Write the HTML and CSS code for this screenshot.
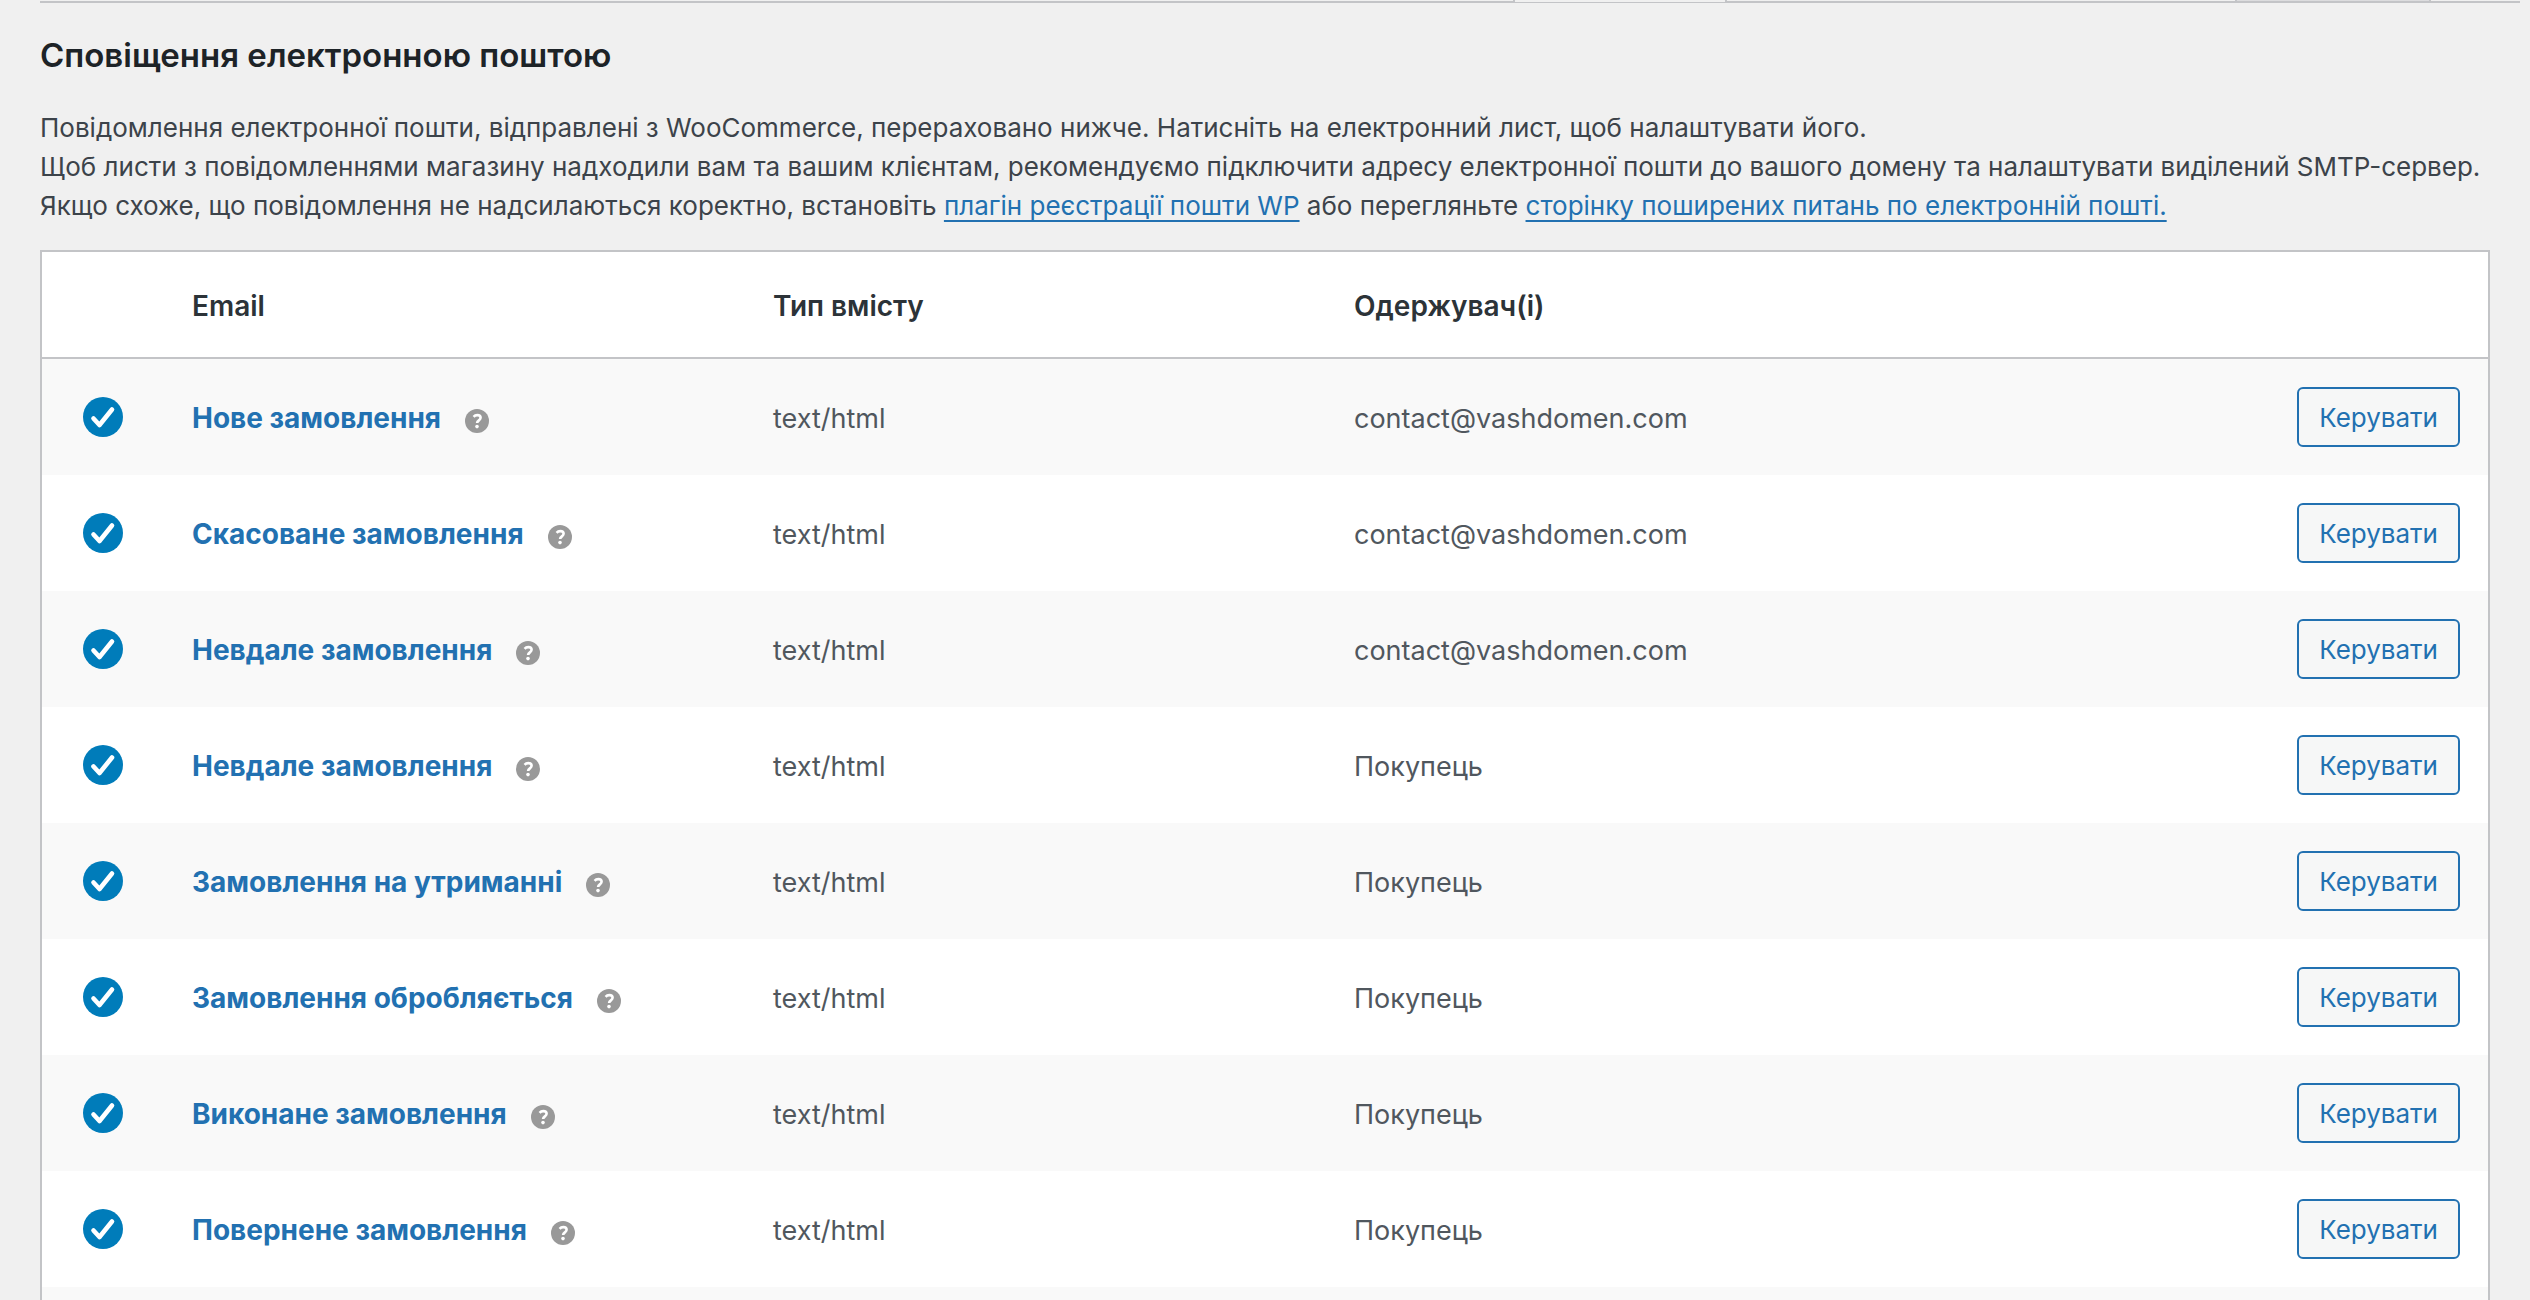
FILE: index.html
```html
<!DOCTYPE html>
<html lang="uk">
<head>
<meta charset="utf-8">
<title>Сповіщення електронною поштою</title>
<link rel="stylesheet" href="styles.css">
</head>
<body>
<svg class="sprite" aria-hidden="true">
  <symbol id="check" viewBox="0 0 40 40">
    <circle cx="20" cy="20" r="20" fill="#007cba"/>
    <path d="M10.500 21.500L16.500 28L29 12.500" fill="none" stroke="#fff" stroke-width="4.600" stroke-linecap="round" stroke-linejoin="round"/>
  </symbol>
  <symbol id="help" viewBox="0 0 24 24">
    <circle cx="12" cy="12" r="12" fill="#999"/>
    <path d="M8.600 7.800c1-1.200 2.200-1.700 3.700-1.700 2 0 3.300 1 3.300 2.700 0 2.500-3.500 2.600-3.500 5.200" fill="none" stroke="#fff" stroke-width="2.600"/>
    <circle cx="12" cy="17.600" r="1.800" fill="#fff"/>
  </symbol>
</svg>
<nav class="tabs" aria-label="Розділи налаштувань">
  <span class="tab tab-active"></span>
  <span class="tab"></span>
</nav>
<main class="page">
  <h2 class="title">Сповіщення електронною поштою</h2>
  <p class="intro">Повідомлення електронної пошти, відправлені з WooCommerce, перераховано нижче. Натисніть на електронний лист, щоб налаштувати його.<br>Щоб листи з повідомленнями магазину надходили вам та вашим клієнтам, рекомендуємо підключити адресу електронної пошти до вашого домену та налаштувати виділений SMTP-сервер.<br>Якщо схоже, що повідомлення не надсилаються коректно, встановіть <a href="#">плагін реєстрації пошти WP</a> або перегляньте <a href="#">сторінку поширених питань по електронній пошті.</a></p>
  <table class="emails">
    <colgroup><col class="col-status"><col class="col-text"><col class="col-text"><col class="col-text"><col></colgroup>
    <thead>
      <tr><th></th><th>Email</th><th>Тип вмісту</th><th>Одержувач(і)</th><th></th></tr>
    </thead>
    <tbody>
      <tr><td class="status"><svg class="check"><use href="#check"/></svg></td><td><a class="name" href="#">Нове замовлення</a><svg class="help"><use href="#help"/></svg></td><td>text/html</td><td>contact@vashdomen.com</td><td class="action"><a class="button" href="#">Керувати</a></td></tr>
      <tr><td class="status"><svg class="check"><use href="#check"/></svg></td><td><a class="name" href="#">Скасоване замовлення</a><svg class="help"><use href="#help"/></svg></td><td>text/html</td><td>contact@vashdomen.com</td><td class="action"><a class="button" href="#">Керувати</a></td></tr>
      <tr><td class="status"><svg class="check"><use href="#check"/></svg></td><td><a class="name" href="#">Невдале замовлення</a><svg class="help"><use href="#help"/></svg></td><td>text/html</td><td>contact@vashdomen.com</td><td class="action"><a class="button" href="#">Керувати</a></td></tr>
      <tr><td class="status"><svg class="check"><use href="#check"/></svg></td><td><a class="name" href="#">Невдале замовлення</a><svg class="help"><use href="#help"/></svg></td><td>text/html</td><td>Покупець</td><td class="action"><a class="button" href="#">Керувати</a></td></tr>
      <tr><td class="status"><svg class="check"><use href="#check"/></svg></td><td><a class="name" href="#">Замовлення на утриманні</a><svg class="help"><use href="#help"/></svg></td><td>text/html</td><td>Покупець</td><td class="action"><a class="button" href="#">Керувати</a></td></tr>
      <tr><td class="status"><svg class="check"><use href="#check"/></svg></td><td><a class="name" href="#">Замовлення обробляється</a><svg class="help"><use href="#help"/></svg></td><td>text/html</td><td>Покупець</td><td class="action"><a class="button" href="#">Керувати</a></td></tr>
      <tr><td class="status"><svg class="check"><use href="#check"/></svg></td><td><a class="name" href="#">Виконане замовлення</a><svg class="help"><use href="#help"/></svg></td><td>text/html</td><td>Покупець</td><td class="action"><a class="button" href="#">Керувати</a></td></tr>
      <tr><td class="status"><svg class="check"><use href="#check"/></svg></td><td><a class="name" href="#">Повернене замовлення</a><svg class="help"><use href="#help"/></svg></td><td>text/html</td><td>Покупець</td><td class="action"><a class="button" href="#">Керувати</a></td></tr>
      <tr class="row-next"><td colspan="5"></td></tr>
    </tbody>
  </table>
</main>
</body>
</html>
```
FILE: styles.css
```css
* {
  box-sizing: border-box;
}

body {
  margin: 0;
  background: #f0f0f0;
  color: #3c434a;
  font: 26px/39px Inter, "Liberation Sans", sans-serif;
}

a {
  color: #2271b1;
}

.sprite {
  display: none;
}

.tabs {
  display: flex;
  justify-content: flex-end;
  gap: 508px;
  height: 3px;
  margin: 0 10px 0 40px;
  padding-right: 89px;
  border-bottom: 2px solid #c3c4c7;
}

.tab {
  width: 196px;
  height: 1px;
  border: solid #c3c4c7;
  border-width: 0 2px;
  background: #dcdcde;
}

.tab-active {
  width: 214px;
  height: 2px;
  background: #f0f0f0;
}

.page {
  padding: 31px 40px 0;
}

.title {
  margin: 0 0 32px;
  color: #1d2327;
  font-size: 33px;
  font-weight: 600;
  line-height: 42px;
}

.intro {
  margin: 0 0 25px;
}

.intro a {
  text-decoration-thickness: 2px;
  text-underline-offset: 5px;
}

.emails {
  width: 100%;
  table-layout: fixed;
  border: 2px solid #c3c4c7;
  border-spacing: 0;
  background: #fff;
  font-size: 27px;
}

.col-status {
  width: 130px;
}

.col-text {
  width: 581px;
}

.emails th {
  height: 107px;
  padding: 4px 20px 0;
  border-bottom: 2px solid #c3c4c7;
  color: #2c3338;
  font-size: 28px;
  font-weight: 600;
  text-align: left;
}

.emails td {
  height: 116px;
  padding: 2px 20px 0;
  color: #50575e;
}

.emails .status {
  padding: 0 0 0 41px;
}

.emails tbody tr:nth-child(odd) {
  background: #f9f9f9;
}

.emails .row-next td {
  height: 13px;
}

.check {
  display: block;
  width: 40px;
  height: 40px;
}

.name {
  font-size: 28px;
  font-weight: 700;
  text-decoration: none;
}

.help {
  width: 24px;
  height: 24px;
  margin-left: 24px;
  vertical-align: -5px;
}

.emails .action {
  padding: 0 28px 0 0;
  text-align: right;
}

.button {
  display: inline-block;
  padding: 2px 20px 0;
  border: 2px solid #2271b1;
  border-radius: 6px;
  background: #f6f7f7;
  font-size: 26px;
  line-height: 54px;
  text-decoration: none;
  vertical-align: middle;
}
```
